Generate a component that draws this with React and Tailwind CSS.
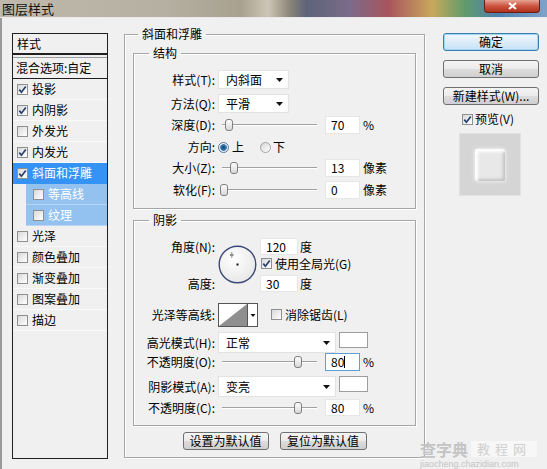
import clsx from 'clsx';

const Arrow = () => (
  <svg width="7" height="4" viewBox="0 0 7 4">
    <path d="M0 0h7L3.5 4z" fill="#111" />
  </svg>
);

function Check({ on }) {
  return (
    <span className="inline-flex w-[11px] h-[11px] shrink-0 items-center justify-center border border-[#8e8f8f] bg-[linear-gradient(135deg,#d9d9d9,#ffffff)]">
      {on && (
        <svg width="9" height="9" viewBox="0 0 9 9">
          <path d="M1.3 4.6L3.4 7.2L7.8 1.4" fill="none" stroke="#27406f" strokeWidth="1.7" />
        </svg>
      )}
    </span>
  );
}

function Radio({ on }) {
  if (on) {
    return (
      <span className="block w-[11px] h-[11px] shrink-0 rounded-full border border-[#5a7896] bg-[radial-gradient(circle,#173f66_0%,#3f86bd_48%,#e3ecf4_58%,#ffffff_100%)]" />
    );
  }
  return <span className="block w-[11px] h-[11px] shrink-0 rounded-full border border-[#a3a3a3] bg-[linear-gradient(135deg,#d6d6d6,#ffffff)]" />;
}

function Select({ value, tall }) {
  return (
    <div
      className={clsx(
        'flex items-center justify-between bg-white border border-[#e2e2e2] pl-[7px] pr-[5px] shrink-0',
        tall ? 'w-[118px] h-[21px]' : 'w-[71px] h-[19px]'
      )}
    >
      <span>{value}</span>
      <Arrow />
    </div>
  );
}

function Slider({ at }) {
  return (
    <div className="relative w-[102px] h-full shrink-0">
      <div className="absolute left-[4px] w-[95px] top-[8px] h-[2px] border-t border-[#a0a0a0] border-b border-b-white" />
      <div
        className="absolute top-[3px] w-[8px] h-[12px] rounded-[3px] border border-[#7f7f7f] bg-[linear-gradient(#fdfdfd,#d8d8d8)]"
        style={{ left: at }}
      />
    </div>
  );
}

function Field({ value, focus, w }) {
  return (
    <div
      className={clsx(
        'h-full bg-white border flex items-center pl-[5px] shrink-0',
        w === 'wide' ? 'w-[38px]' : 'w-[35px]',
        focus ? 'border-[#5b9fe0]' : 'border-[#e6e6e6]'
      )}
    >
      {value}
      {focus && <span className="w-px h-[12px] bg-black" />}
    </div>
  );
}

const Label = ({ children }) => <span className="w-[81px] text-right shrink-0 whitespace-nowrap">{children}</span>;

function SliderRow({ label, at, value, unit, focus, h = 'h-[18px]', mt }) {
  return (
    <div className={clsx('flex items-center', h, mt)}>
      <Label>{label}</Label>
      <div className="ml-[3px] h-full">
        <Slider at={at} />
      </div>
      <div className="ml-[5px] h-full">
        <Field value={value} focus={focus} />
      </div>
      <span className="ml-[3px]">{unit}</span>
    </div>
  );
}

function WinButton({ children, primary, className }) {
  return (
    <div
      className={clsx(
        'h-[18px] flex items-center justify-center rounded-[3px] border leading-[16px]',
        primary
          ? 'border-[#3c7fb1] bg-[linear-gradient(#f2f9fd,#dcecf8_50%,#c6e2f6)] shadow-[inset_0_0_0_1px_#9fd4f5]'
          : 'border-[#707070] bg-[linear-gradient(#f4f4f4,#ebebeb_50%,#dddddd_51%,#cfcfcf)]',
        className
      )}
    >
      {children}
    </div>
  );
}

const styles = [
  { name: '投影', on: true },
  { name: '内阴影', on: true },
  { name: '外发光', on: false },
  { name: '内发光', on: true },
  { name: '斜面和浮雕', on: true, active: true },
  { name: '等高线', on: false, sub: true },
  { name: '纹理', on: false, sub: true },
  { name: '光泽', on: false },
  { name: '颜色叠加', on: false },
  { name: '渐变叠加', on: false },
  { name: '图案叠加', on: false },
  { name: '描边', on: false },
];

function StyleList() {
  return (
    <div className="w-[96px] h-[426px] border border-[#1f1f1f] text-[12px] shrink-0">
      <div className="h-[21px] border-b-2 border-[#1f1f1f] pl-[4px] flex items-center">样式</div>
      <div className="h-[22px] mt-[2px] border-t border-[#9c9c9c] border-b border-b-[#1f1f1f] pl-[3px] flex items-center whitespace-nowrap">
        混合选项:自定
      </div>
      {styles.map((s) => {
        if (s.sub) {
          return (
            <div key={s.name} className="h-[21px] pl-[13px] flex">
              <div className="flex-1 flex items-center pl-[7px] bg-[#93c1f0] text-white border-b border-[#b9d6f5]">
                <Check on={s.on} />
                <span className="ml-[4px]">{s.name}</span>
              </div>
            </div>
          );
        }
        return (
          <div
            key={s.name}
            className={clsx(
              'h-[21px] flex items-center pl-[4px] border-b',
              s.active ? 'bg-[#3493f5] text-white border-[#3493f5]' : 'border-[#fafafa]'
            )}
          >
            <Check on={s.on} />
            <span className="ml-[4px]">{s.name}</span>
          </div>
        );
      })}
    </div>
  );
}

function AngleDial() {
  return (
    <svg width="39" height="39" viewBox="0 0 39 39" className="shrink-0">
      <defs>
        <radialGradient id="dial" cx="40%" cy="35%" r="70%">
          <stop offset="0%" stopColor="#ffffff" />
          <stop offset="100%" stopColor="#e6e6e6" />
        </radialGradient>
      </defs>
      <circle cx="19.5" cy="19.5" r="18.3" fill="url(#dial)" stroke="#3b4a78" strokeWidth="1.4" />
      <rect x="18.5" y="18.5" width="2" height="2" fill="#111" />
      <path d="M12 10h3.5" stroke="#222" strokeWidth="1" />
      <rect x="13.3" y="7.5" width="1" height="1" fill="#222" />
      <rect x="13.3" y="11.5" width="1" height="1" fill="#222" />
    </svg>
  );
}

function ContourThumb() {
  return (
    <svg width="40" height="24" viewBox="0 0 40 24" className="shrink-0">
      <rect x="0.5" y="0.5" width="39" height="23" fill="#fff" stroke="#555" />
      <polygon points="1,23 29,1 29,23" fill="#8f8f8f" />
      <path d="M29.5 1v22" stroke="#555" />
      <path d="M32.5 11h5l-2.5 3z" fill="#111" />
    </svg>
  );
}

const Swatch = () => <div className="ml-[3px] self-start w-[29px] h-[16px] bg-white border border-[#9d9d9d] shrink-0" />;

export default function App() {
  return (
    <div className="relative w-[547px] h-[469px] overflow-hidden bg-[#f0f0f0] text-[12px] leading-[16px] text-black font-['Noto_Sans_CJK_SC','Noto_Sans',sans-serif]">
      <div className="h-[17px] flex items-start bg-[linear-gradient(90deg,#bfb9ac_0%,#b6b0a2_30%,#a8a190_44%,#cdc6b6_49%,#8b8478_53%,#5d6479_56%,#7b6b8a_64%,#a9545d_71%,#c9a85c_79%,#609b6b_85%,#4d80b0_91%,#80a3c9_100%)]">
        <span className="ml-[2px] text-[13px] leading-[17px] text-[#151515]">图层样式</span>
        <div className="ml-auto mr-[7px] w-[56px] h-[13px] rounded-b-[4px] border border-t-0 border-[#6b1d12] bg-[linear-gradient(#e7a395,#cb553f_50%,#b0301d)] flex items-center justify-center">
          <svg width="9" height="8" viewBox="0 0 9 8">
            <path d="M1 1l7 6M8 1L1 7" stroke="#fff" strokeWidth="2" />
          </svg>
        </div>
      </div>
      <div className="h-px bg-[#e9e9e9]" />

      <div className="flex items-start border-l-2 border-[#9a9a9a] h-[451px]">
        <div className="ml-[10px] mt-[15px]">
          <StyleList />
        </div>

        <fieldset className="ml-[16px] mt-[8px] w-[301px] border border-[#a6a6a6] px-[8px] pb-[7px] shadow-[inset_1px_1px_0_#fff,1px_1px_0_#fff]">
          <legend className="ml-[5px] px-[4px] leading-[16px]">斜面和浮雕</legend>

          <fieldset className="mt-[3px] border border-[#a6a6a6] pb-[9px] shadow-[inset_1px_1px_0_#fff,1px_1px_0_#fff]">
            <legend className="ml-[15px] px-[4px] leading-[16px]">结构</legend>
            <div className="flex items-center h-[19px] mt-[9px]">
              <Label>样式(T):</Label>
              <div className="ml-[3px]">
                <Select value="内斜面" />
              </div>
            </div>
            <div className="flex items-center h-[19px] mt-[5px]">
              <Label>方法(Q):</Label>
              <div className="ml-[3px]">
                <Select value="平滑" />
              </div>
            </div>
            <SliderRow label="深度(D):" at={7} value="70" unit="%" mt="mt-[3px]" />
            <div className="flex items-center h-[18px] mt-[4px]">
              <Label>方向:</Label>
              <span className="ml-[3px]">
                <Radio on />
              </span>
              <span className="ml-[3px]">上</span>
              <span className="ml-[16px]">
                <Radio />
              </span>
              <span className="ml-[2px]">下</span>
            </div>
            <SliderRow label="大小(Z):" at={12} value="13" unit="像素" mt="mt-[3px]" />
            <SliderRow label="软化(F):" at={2} value="0" unit="像素" mt="mt-[4px]" />
          </fieldset>

          <fieldset className="mt-[3px] border border-[#a6a6a6] pb-[9px] shadow-[inset_1px_1px_0_#fff,1px_1px_0_#fff]">
            <legend className="ml-[15px] px-[4px] leading-[16px]">阴影</legend>
            <div className="flex items-start mt-[10px]">
              <div className="w-[81px] shrink-0 flex flex-col text-right">
                <span className="h-[17px] flex items-center justify-end">角度(N):</span>
                <span className="h-[17px] mt-[20px] flex items-center justify-end">高度:</span>
              </div>
              <div className="ml-[3px] mt-[7px]">
                <AngleDial />
              </div>
              <div className="ml-[3px] flex flex-col">
                <div className="flex items-center h-[17px]">
                  <Field value="120" w="wide" />
                  <span className="ml-[2px]">度</span>
                </div>
                <div className="flex items-center h-[15px] mt-[1px] pl-px">
                  <Check on />
                  <span className="ml-[3px] whitespace-nowrap">使用全局光(G)</span>
                </div>
                <div className="flex items-center h-[17px] mt-[4px]">
                  <Field value="30" w="wide" />
                  <span className="ml-[2px]">度</span>
                </div>
              </div>
            </div>

            <div className="flex items-center h-[24px] mt-[11px]">
              <Label>光泽等高线:</Label>
              <div className="ml-[3px]">
                <ContourThumb />
              </div>
              <span className="ml-[13px]">
                <Check />
              </span>
              <span className="ml-[3px] whitespace-nowrap">消除锯齿(L)</span>
            </div>

            <div className="flex items-center h-[21px] mt-[5px]">
              <Label>高光模式(H):</Label>
              <div className="ml-[3px]">
                <Select value="正常" tall />
              </div>
              <Swatch />
            </div>
            <SliderRow label="不透明度(O):" at={76} value="80" unit="%" focus />

            <div className="flex items-center h-[21px] mt-[5px]">
              <Label>阴影模式(A):</Label>
              <div className="ml-[3px]">
                <Select value="变亮" tall />
              </div>
              <Swatch />
            </div>
            <SliderRow label="不透明度(C):" at={76} value="80" unit="%" h="h-[17px]" mt="mt-[2px]" />
          </fieldset>

          <div className="flex justify-center gap-[11px] mt-[6px]">
            <WinButton className="w-[86px]">设置为默认值</WinButton>
            <WinButton className="w-[87px]">复位为默认值</WinButton>
          </div>
        </fieldset>

        <div className="ml-[18px] mt-[15px] w-[96px] flex flex-col">
          <WinButton primary>确定</WinButton>
          <WinButton className="mt-[9px]">取消</WinButton>
          <WinButton className="mt-[9px] whitespace-nowrap">新建样式(W)...</WinButton>
          <div className="mt-[8px] h-[12px] flex items-center pl-[19px]">
            <Check on />
            <span className="ml-[2px]">预览(V)</span>
          </div>
          <div className="mt-[8px] ml-[16px] w-[62px] h-[63px] bg-[#d5d5d5] border border-[#e2e2e2] flex items-center justify-center">
            <div className="w-[30px] h-[32px] rounded-[2px] bg-[#e8e8e8] shadow-[inset_3px_3px_3px_rgba(255,255,255,0.95),inset_-2px_-2px_3px_rgba(150,150,150,0.45),0_0_4px_rgba(255,255,255,0.9)]" />
          </div>
        </div>
      </div>

      <div className="absolute right-0 bottom-0 w-[127px] h-[29px] flex flex-col items-start pointer-events-none text-[#c4c4c4]">
        <div className="flex items-center h-[18px]">
          <span className="text-[16px] leading-[18px] font-bold">查字典</span>
          <span className="ml-[3px] px-[6px] text-[13px] leading-[16px] tracking-[5px] bg-[#f7f7f7] text-[#cfcfcf]">教程网</span>
        </div>
        <span className="mt-px text-[9px] leading-[10px] font-['Liberation_Sans',sans-serif] whitespace-nowrap">jiaocheng.chazidian.com</span>
      </div>
    </div>
  );
}
